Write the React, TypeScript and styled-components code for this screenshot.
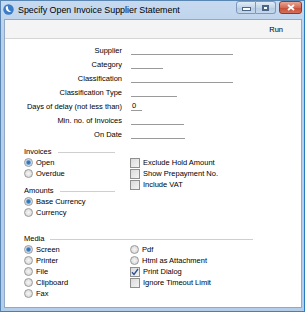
import { Fragment } from 'react';
import styled, { createGlobalStyle } from 'styled-components';

const GlobalStyle = createGlobalStyle`
  html, body {
    margin: 0;
    padding: 0;
    background: #fff;
  }
  body {
    font-family: "Liberation Sans", Arial, sans-serif;
    color: #000;
  }
`;

const Window = styled.div`
  width: 305px;
  height: 312px;
  box-sizing: border-box;
  display: flex;
  flex-direction: column;
  background: linear-gradient(#c6d9ef, #b9d0ea 40px, #b4cde9);
  border: 1px solid #5a86b4;
  border-bottom-color: #1f8fd3;
  border-right-color: #2a7cc0;
`;

const TitleBar = styled.div`
  height: 17px;
  display: flex;
  align-items: center;
  padding: 0 2px;
`;

const TitleText = styled.div`
  flex: 1;
  margin-left: 4px;
  font-size: 8.9px;
  color: #000;
  white-space: nowrap;
`;

const Controls = styled.div`
  display: flex;
  align-items: flex-start;
  gap: 3px;
  align-self: flex-start;
`;

const ControlGroup = styled.div`
  display: flex;
`;

const ControlButton = styled.div<{ $side: 'left' | 'right' }>`
  width: 20px;
  height: 13px;
  box-sizing: border-box;
  display: flex;
  align-items: center;
  justify-content: center;
  background: linear-gradient(#e2ebf6, #c3d5ea 50%, #b3c9e3 51%, #c6d8ec);
  border: 1px solid #7c99bd;
  border-radius: ${(p) => (p.$side === 'left' ? '3px 0 0 3px' : '0 3px 3px 0')};
  ${(p) => (p.$side === 'right' ? 'border-left: none;' : '')}
`;

const CloseButton = styled.div`
  width: 23px;
  height: 13px;
  box-sizing: border-box;
  display: flex;
  align-items: center;
  justify-content: center;
  background: linear-gradient(#e9a796, #d56a55 50%, #c54a34 51%, #d5705a);
  border: 1px solid #8d3b2f;
  border-radius: 3px;
`;

const MinGlyph = styled.div`
  width: 7px;
  height: 2px;
  margin-top: 3px;
  background: #fff;
  border: 1px solid #4c6688;
`;

const MaxGlyph = styled.div`
  width: 5px;
  height: 4px;
  background: #fff;
  border: 1px solid #4c6688;
  box-shadow: inset 0 0 0 1px #4c6688;
`;

const Client = styled.div`
  flex: 1;
  margin: 1px 2px 3px 3px;
  display: flex;
  flex-direction: column;
  background: #fff;
  border: 1px solid #8fa9c8;
  font-size: 7.5px;
  color: #000;
`;

const Toolbar = styled.div`
  height: 18px;
  display: flex;
  align-items: center;
  justify-content: flex-end;
  padding-right: 18px;
  background: #f4f4f4;
  border-bottom: 1px solid #d6d6d6;
`;

const Content = styled.div`
  flex: 1;
  padding-top: 4px;
  display: flex;
  flex-direction: column;
`;

const FormGrid = styled.div`
  display: grid;
  grid-template-columns: 117px auto;
  column-gap: 9px;
  grid-auto-rows: 14px;
  align-items: center;
`;

const Label = styled.div`
  text-align: right;
  white-space: nowrap;
`;

const Field = styled.div<{ $w: number }>`
  width: ${(p) => p.$w}px;
  height: 10px;
  box-sizing: border-box;
  border-bottom: 1px solid #9a9a9a;
  padding-left: 1px;
  line-height: 9px;
`;

const Options = styled.div`
  display: flex;
  padding-left: 19px;
  margin-top: 4px;
`;

const Column = styled.div<{ $w: number }>`
  width: ${(p) => p.$w}px;
  display: flex;
  flex-direction: column;
`;

const RightColumn = styled.div`
  display: flex;
  flex-direction: column;
  margin-left: 15px;
  padding-top: 12px;
`;

const Legend = styled.div<{ $w: number; $gap?: number }>`
  width: ${(p) => p.$w}px;
  height: 12px;
  display: flex;
  align-items: center;
  margin-top: ${(p) => p.$gap ?? 0}px;
  &::after {
    content: '';
    flex: 1;
    height: 1px;
    margin: 3px 0 0 6px;
    background: #cfcfcf;
  }
`;

const Row = styled.div`
  height: 11px;
  display: flex;
  align-items: center;
  gap: 3px;
  white-space: nowrap;
  color: #000;
`;

const Radio = styled.span<{ $on?: boolean }>`
  width: 9px;
  height: 9px;
  box-sizing: border-box;
  border-radius: 50%;
  border: 1px solid #9a9a9a;
  background: ${(p) =>
    p.$on
      ? 'radial-gradient(circle, #2f6fb2 0, #3d7fc4 1.6px, #b9cfe6 2.6px, #e6e6e6 3.4px)'
      : 'radial-gradient(circle, #f6f6f6 0, #dcdcdc 3.5px)'};
`;

const Check = styled.span`
  width: 10px;
  height: 10px;
  box-sizing: border-box;
  border: 1px solid #8f8f8f;
  background: linear-gradient(135deg, #dadada, #f3f3f3);
  display: flex;
  align-items: center;
  justify-content: center;
`;

const MediaGrid = styled.div`
  display: grid;
  grid-template-columns: 106px auto;
  grid-auto-flow: column;
  grid-template-rows: repeat(5, 11px);
`;

const Tick = () => (
  <svg width="8" height="8" viewBox="0 0 8 8">
    <path d="M1 4.2 L3 6.5 L7 1" fill="none" stroke="#2a4f8f" strokeWidth="1.3" />
  </svg>
);

const Logo = () => (
  <svg width="11" height="11" viewBox="0 0 11 11">
    <circle cx="5.5" cy="5.5" r="5.2" fill="#3b7cc7" />
    <path d="M3 2.5 C2 5 4 8.5 8.5 8 C6 7 4.5 5 5 2.2 Z" fill="#fff" />
  </svg>
);

const fields = [
  { label: 'Supplier', w: 102 },
  { label: 'Category', w: 32 },
  { label: 'Classification', w: 102 },
  { label: 'Classification Type', w: 46 },
  { label: 'Days of delay (not less than)', w: 11, value: '0' },
  { label: 'Min. no. of Invoices', w: 53 },
  { label: 'On Date', w: 54 },
];

const RadioItem = ({ label, on }: { label: string; on?: boolean }) => (
  <Row>
    <Radio $on={on} />
    {label}
  </Row>
);

const CheckItem = ({ label, on }: { label: string; on?: boolean }) => (
  <Row>
    <Check>{on && <Tick />}</Check>
    {label}
  </Row>
);

export default function App() {
  return (
    <>
      <GlobalStyle />
      <Window>
        <TitleBar>
          <Logo />
          <TitleText>Specify Open Invoice Supplier Statement</TitleText>
          <Controls>
            <ControlGroup>
              <ControlButton $side="left">
                <MinGlyph />
              </ControlButton>
              <ControlButton $side="right">
                <MaxGlyph />
              </ControlButton>
            </ControlGroup>
            <CloseButton>
              <svg width="8" height="7" viewBox="0 0 8 7">
                <path d="M1 1 L7 6 M7 1 L1 6" stroke="#fff" strokeWidth="1.8" />
              </svg>
            </CloseButton>
          </Controls>
        </TitleBar>
        <Client>
          <Toolbar>Run</Toolbar>
          <Content>
            <FormGrid>
              {fields.map((f) => (
                <Fragment key={f.label}>
                  <Label>{f.label}</Label>
                  <Field $w={f.w}>{f.value}</Field>
                </Fragment>
              ))}
            </FormGrid>
            <Options>
              <Column $w={91}>
                <Legend $w={91}>Invoices</Legend>
                <RadioItem label="Open" on />
                <RadioItem label="Overdue" />
                <Legend $w={91} $gap={5}>Amounts</Legend>
                <RadioItem label="Base Currency" on />
                <RadioItem label="Currency" />
              </Column>
              <RightColumn>
                <CheckItem label="Exclude Hold Amount" />
                <CheckItem label="Show Prepayment No." />
                <CheckItem label="Include VAT" />
              </RightColumn>
            </Options>
            <Options>
              <Column $w={229}>
                <Legend $w={229} $gap={10}>Media</Legend>
                <MediaGrid>
                  <RadioItem label="Screen" on />
                  <RadioItem label="Printer" />
                  <RadioItem label="File" />
                  <RadioItem label="Clipboard" />
                  <RadioItem label="Fax" />
                  <RadioItem label="Pdf" />
                  <RadioItem label="Html as Attachment" />
                  <CheckItem label="Print Dialog" on />
                  <CheckItem label="Ignore Timeout Limit" />
                </MediaGrid>
              </Column>
            </Options>
          </Content>
        </Client>
      </Window>
    </>
  );
}
